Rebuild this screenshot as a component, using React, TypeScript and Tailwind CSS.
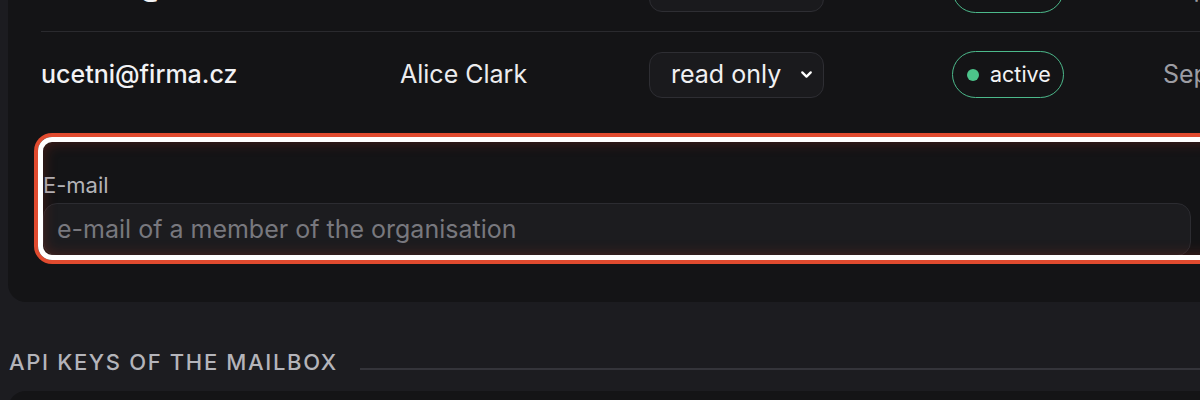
import { ChevronDown } from "lucide-react";

interface Member {
  email: string;
  name: string;
  role: string;
  status: string;
  added: string;
}

const MEMBERS: Member[] = [
  { email: "marketa@firma.cz", name: "Markéta Dvořák", role: "admin", status: "active", added: "Sep 2, 2024" },
  { email: "ucetni@firma.cz", name: "Alice Clark", role: "read only", status: "active", added: "Sep 14, 2024" },
];

function MemberRow({ member, last }: { member: Member; last?: boolean }) {
  return (
    <div
      className={
        "grid h-[85px] grid-cols-[359px_249px_303px_211px_1fr] items-center " +
        (last ? "" : "border-b border-[#2a2a2e]")
      }
    >
      <span className="text-[25px] font-medium text-[#f2f2f4]">{member.email}</span>
      <span className="text-[25px] text-[#ececee]">{member.name}</span>
      <div className="flex h-[46px] w-[175px] items-center justify-between rounded-[13px] border border-[#2e2e33] bg-[#1a1a1d] pl-[21px] pr-[8px]">
        <span className="text-[25px] text-[#f0f0f2]">{member.role}</span>
        <ChevronDown className="h-[17px] w-[17px] text-white" strokeWidth={3.2} />
      </div>
      <div className="flex h-[47px] w-[112px] items-center gap-[11px] rounded-full border-[1.5px] border-[#4cb98b] pl-[14px]">
        <span className="h-[12px] w-[12px] rounded-full bg-[#4cc38a]" />
        <span className="text-[21.5px] text-[#f2f2f4]">{member.status}</span>
      </div>
      <span className="whitespace-nowrap text-[25px] text-[#9d9da3]">{member.added}</span>
    </div>
  );
}

export default function App() {
  return (
    <div
      className="h-[400px] w-[1200px] overflow-hidden bg-[#1c1c20]"
      style={{ fontFamily: "Inter, 'Noto Sans', sans-serif" }}
    >
      {/* Members card */}
      <div className="ml-[8px] mt-[-70px] w-[1300px] rounded-[18px] bg-[#141416] pb-[46px] pl-[33px] pt-[17px]">
        {MEMBERS.map((m, i) => (
          <MemberRow key={m.email} member={m} last={i === MEMBERS.length - 1} />
        ))}

        {/* Invite form (focused) */}
        <div className="relative mt-[25px] ml-[2px]">
          <div className="flex items-end gap-4 pt-[30px]">
            <div className="flex flex-col">
              <label className="text-[22px] leading-[27px] text-[#b3b3b8]">E-mail</label>
              <div className="mt-[4px] flex h-[53px] w-[1148px] items-center rounded-[14px] border border-[#2c2c31] bg-[#1c1c1f] px-[13px]">
                <span className="text-[25px] text-[#78787e]">e-mail of a member of the organisation</span>
              </div>
            </div>
            <div className="h-[53px] w-[120px] rounded-[14px] bg-[#1c1c1f]" />
          </div>
          <div className="pointer-events-none absolute bottom-[-4px] left-[-5px] right-[-4px] top-[-5px] rounded-[14px] border-[5px] border-white shadow-[0_0_0_4px_#e14b2f,inset_0_0_14px_rgba(170,50,30,0.35)]" />
        </div>
      </div>

      {/* API keys section */}
      <div className="mt-[44px] flex items-center gap-[22px] pl-[9px]">
        <h2 className="whitespace-nowrap text-[22px] font-medium uppercase tracking-[0.075em] text-[#b4b4ba]">
          API keys of the mailbox
        </h2>
        <div className="mt-[12px] h-[2px] flex-1 bg-[#34343a]" />
      </div>
      <div className="ml-[8px] mt-[12px] h-[80px] w-[1300px] rounded-[18px] bg-[#141416]" />
    </div>
  );
}
